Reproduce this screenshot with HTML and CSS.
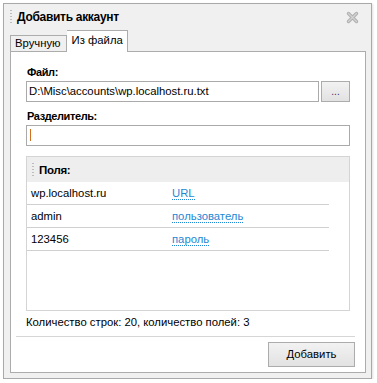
FILE: index.html
```html
<!DOCTYPE html>
<html>
<head>
<meta charset="utf-8">
<link rel="stylesheet" href="styles.css">
</head>
<body>
<div class="window">
  <div class="titlebar">
    <span class="grip"></span>
    <span class="title">Добавить аккаунт</span>
    <svg class="close" width="13" height="13" viewBox="0 0 13 13"><path d="M2.5 2.5 L10.5 10.5 M10.5 2.5 L2.5 10.5" stroke="#b0b0b0" stroke-width="3.4" stroke-linecap="round"/><path d="M2.5 2.5 L10.5 10.5 M10.5 2.5 L2.5 10.5" stroke="#d2d2d2" stroke-width="1.3" stroke-linecap="round"/></svg>
  </div>
  <div class="tabs">
    <div class="tab">Вручную</div>
    <div class="tab active">Из файла</div>
  </div>
  <div class="panel">
    <div class="label">Файл:</div>
    <div class="row">
      <div class="input grow">D:\Misc\accounts\wp.localhost.ru.txt</div>
      <div class="btn small">...</div>
    </div>
    <div class="label second">Разделитель:</div>
    <div class="input"><span class="caret"></span></div>
    <div class="fields">
      <div class="fields-head"><span class="grip small-grip"></span>Поля:</div>
      <div class="frow"><span class="fval">wp.localhost.ru</span><a class="flink">URL</a></div>
      <div class="frow"><span class="fval">admin</span><a class="flink">пользователь</a></div>
      <div class="frow"><span class="fval">123456</span><a class="flink">пароль</a></div>
    </div>
    <div class="count">Количество строк: 20, количество полей: 3</div>
    <div class="footer">
      <div class="btn add">Добавить</div>
    </div>
  </div>
</div>
</body>
</html>
```
FILE: styles.css
```css
html, body { margin: 0; padding: 0; background: #ffffff; }
body { font-family: "Liberation Sans", Arial, sans-serif; font-size: 11.3px; color: #000; }
.window {
  margin: 3px 0 0 3px;
  width: 369px;
  height: 376px;
  box-sizing: border-box;
  border: 1px solid #a9a9a9;
  background: #f0f0f0;
  padding: 0 5px 5px 6px;
  display: flex;
  flex-direction: column;
  box-shadow: 1px 1px 2px rgba(0,0,0,0.12);
}
.titlebar {
  flex-shrink: 0;
  height: 26px;
  display: flex;
  align-items: center;
}
.grip {
  width: 2px;
  height: 15px;
  margin-right: 5px;
  background-image: linear-gradient(#bdbdbd 50%, transparent 50%);
  background-size: 2px 3px;
}
.title { font-weight: bold; font-size: 12px; letter-spacing: -0.3px; }
.close { margin-left: auto; margin-right: 7px; }
.tabs {
  flex-shrink: 0;
  display: flex;
  align-items: flex-end;
  height: 21px;
}
.tab {
  box-sizing: border-box;
  height: 16px;
  line-height: 15px;
  padding: 0 5px 0 4px;
  border: 1px solid #acacac;
  border-bottom: none;
  background: #f0f0f0;
}
.tab.active {
  height: 22px;
  line-height: 18px;
  background: #fff;
  border-left: none;
  padding: 0 4px 0 5px;
  margin-bottom: -1px;
  position: relative;
}
.panel {
  flex: 1;
  min-height: 0;
  background: #fff;
  border: 1px solid #acacac;
  padding: 12px 15px 5px 15px;
  display: flex;
  flex-direction: column;
}
.label {
  font-weight: bold;
  font-size: 11px;
  letter-spacing: -0.4px;
  height: 16px;
  line-height: 16px;
  padding-left: 1px;
  margin-bottom: 1px;
  flex-shrink: 0;
}
.label.second { margin-top: 6px; }
.row { display: flex; gap: 2px; flex-shrink: 0; }
.input {
  flex-shrink: 0;
  height: 19px;
  line-height: 19px;
  border: 1px solid #aaaaaa;
  padding: 0 2px;
  background: #fff;
  white-space: nowrap;
  overflow: hidden;
}
.grow { flex: 1; }
.caret { display: inline-block; width: 1px; height: 12px; background: #d07020; vertical-align: -2px; margin-left: 1px; }
.btn {
  border: 1px solid #acacac;
  background: linear-gradient(#f2f2f2, #e2e2e2);
  text-align: center;
  box-sizing: border-box;
}
.small { width: 29px; height: 21px; line-height: 19px; font-size: 10px; color: #3a2a6a; }
.fields {
  flex-shrink: 0;
  box-sizing: border-box;
  margin-top: 10px;
  height: 155px;
  border: 1px solid #d4d4d4;
  display: flex;
  flex-direction: column;
}
.fields-head {
  flex-shrink: 0;
  height: 25px;
  background: #eeeeee;
  font-weight: bold;
  font-size: 11.5px;
  letter-spacing: -0.3px;
  display: flex;
  align-items: center;
  padding-left: 5px;
}
.small-grip { height: 14px; margin-right: 5px; }
.frow {
  flex-shrink: 0;
  display: flex;
  align-items: center;
  height: 22px;
  border-bottom: 1px solid #d0d0d0;
  margin-right: 20px;
  padding-left: 4px;
}
.fval { width: 141px; }
.flink { color: #1e88d4; border-bottom: 1px dotted #1e88d4; line-height: 12px; }
.count { flex-shrink: 0; margin-top: 4px; height: 14px; line-height: 14px; }
.footer {
  flex-shrink: 0;
  margin: 7px -5px 0 -10px;
  border-top: 1px solid #d6d6d6;
  padding: 5px 0 0 0;
  display: flex;
  justify-content: flex-end;
}
.add { width: 87px; height: 25px; line-height: 23px; }
```
